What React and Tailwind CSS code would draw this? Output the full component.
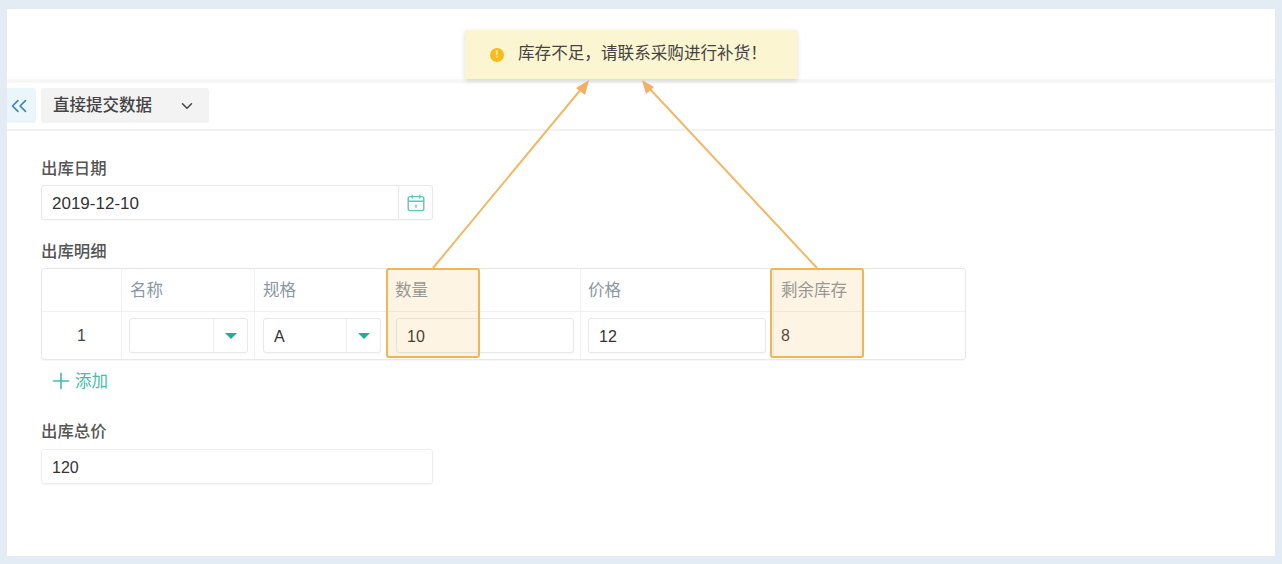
import React from "react";
import { ChevronsLeft, ChevronDown, Plus } from "lucide-react";

const font = "font-['Liberation_Sans','Noto_Sans_CJK_SC',sans-serif]";

const CalendarIcon = () => (
  <svg width="18" height="18" viewBox="0 0 18 18" fill="none" stroke="#5fc6b6" strokeWidth="1.4">
    <rect x="1.2" y="2.6" width="15.6" height="14" rx="2" />
    <path d="M1.2 7.2h15.6M5.2 .8v3.6M12.8 .8v3.6M9 10.4v3.4" />
  </svg>
);

const Field = ({ label, children, className = "", gap = "mt-[5px]" }) => (
  <div className={className}>
    <div className="h-[22px] text-[16.4px] leading-[21px] font-medium text-[#555]">{label}</div>
    <div className={`w-[392px] ${gap}`}>{children}</div>
  </div>
);

const SelectCell = ({ value }) => (
  <div className="flex h-[35px] items-stretch rounded-[3px] border border-[#e9e9e9] bg-white shadow-[0_1px_1px_rgba(0,0,0,0.03)]">
    <div className="flex-1 pl-[10px] text-[16px] leading-[35px] text-[#333]">{value}</div>
    <div className="flex w-[34px] items-center justify-center border-l border-[#eeeeee]">
      <span className="h-0 w-0 border-x-[6px] border-t-[6px] border-x-transparent border-t-[#1fae98]" />
    </div>
  </div>
);

const InputCell = ({ value }) => (
  <div className="h-[35px] rounded-[3px] border border-[#e9e9e9] bg-white pl-[10px] text-[16px] leading-[35px] text-[#333] shadow-[0_1px_1px_rgba(0,0,0,0.03)]">
    {value}
  </div>
);

const Head = ({ children, className = "pl-[8px]" }) => (
  <div className={`h-[43px] border-b border-l border-[#f1f1f1] text-[16.5px] leading-[42px] text-[#8a97a6] ${className}`}>
    {children}
  </div>
);

const Cell = ({ children, className = "" }) => (
  <div className={`h-[47px] border-l border-[#f1f1f1] pt-[6px] ${className}`}>{children}</div>
);

const Mark = ({ className }) => (
  <div className={`absolute top-[-1px] h-[90px] w-[94px] rounded-[3px] border-2 border-[#f2b457] bg-[#f5a623]/12 ${className}`} />
);

const Arrows = () => (
  <svg className="pointer-events-none absolute inset-0 z-20" width="1282" height="564" viewBox="0 0 1282 564" fill="none">
    <path d="M433 268L582 88" stroke="#f2b867" strokeWidth="2" />
    <path d="M817 268L649 88" stroke="#f2b867" strokeWidth="2" />
    <path d="M589 80L576 88L585 95Z" fill="#f2b060" />
    <path d="M642 80L654 87L646 94Z" fill="#f2b060" />
  </svg>
);

export default function App() {
  return (
    <div className={`relative h-screen w-screen overflow-hidden bg-[#e3ebf5] px-[7px] pt-[9px] pb-[8px] ${font}`}>
      <div className="flex h-full flex-col bg-white">
        <div className="relative h-[74px] shrink-0 border-b-[4px] border-[#f7f7f7]">
          <div className="absolute top-[21px] left-[458px] z-10 flex h-[49px] w-[332px] items-center bg-[#fcf5d2] pl-[25px] shadow-[0_2px_5px_rgba(0,0,0,0.14)]">
            <span className="flex h-[14px] w-[14px] items-center justify-center rounded-full bg-[#f8bb1c] text-[10px] font-bold text-[#fff3c4]">!</span>
            <span className="ml-[14px] text-[16.6px] text-[#444]">库存不足，请联系采购进行补货！</span>
          </div>
        </div>

        <div className="flex h-[48px] shrink-0 items-start gap-[5px] border-b-2 border-[#f1f1f1] pt-[5px]">
          <div className="flex h-[35px] w-[29px] items-center justify-start rounded-r-[3px] bg-[#eaf5fc]">
            <ChevronsLeft size={26} strokeWidth={1.5} color="#3f86a8" className="-ml-[1px] shrink-0" />
          </div>
          <div className="flex h-[35px] w-[168px] items-center justify-between rounded-[3px] bg-[#f3f3f3] pr-[13px] pl-[12px] text-[16.5px] font-medium text-[#444]">
            <span>直接提交数据</span>
            <ChevronDown size={18} strokeWidth={2} color="#444" />
          </div>
        </div>

        <div className="flex-1 pt-[27px] pl-[34px]">
          <Field label="出库日期">
            <div className="flex h-[35px] items-stretch rounded-[3px] border border-[#e9e9e9] shadow-[0_1px_1px_rgba(0,0,0,0.03)]">
              <div className="flex-1 pl-[10px] text-[17px] leading-[35px] text-[#333]">2019-12-10</div>
              <div className="flex w-[34px] items-center justify-center border-l border-[#e9e9e9]">
                <CalendarIcon />
              </div>
            </div>
          </Field>

          <div className="mt-[21px] h-[22px] text-[16.4px] leading-[21px] font-medium text-[#555]">出库明细</div>
          <div className="relative mt-[5px] w-[925px] rounded-[3px] border border-[#e8e8e8] shadow-[0_1px_1px_rgba(0,0,0,0.04)]">
            <div className="grid grid-cols-[79px_133px_133px_193px_193px_1fr]">
              <Head className="border-l-0" />
              <Head>名称</Head>
              <Head>规格</Head>
              <Head className="pl-[7px]">数量</Head>
              <Head className="pl-[7px]">价格</Head>
              <Head className="pl-[7px]">剩余库存</Head>

              <Cell className="border-l-0 text-center text-[16px] leading-[35px] text-[#444]">1</Cell>
              <Cell className="pr-[6px] pl-[7px]"><SelectCell value="" /></Cell>
              <Cell className="pr-[6px] pl-[8px]"><SelectCell value="A" /></Cell>
              <Cell className="pr-[6px] pl-[8px]"><InputCell value="10" /></Cell>
              <Cell className="pr-[7px] pl-[7px]"><InputCell value="12" /></Cell>
              <Cell className="pl-[7px] text-[16px] leading-[35px] text-[#444]">8</Cell>
            </div>
            <Mark className="left-[344px]" />
            <Mark className="left-[728px]" />
          </div>

          <div className="mt-[9px] flex h-[24px] items-center pl-[7px] text-[16.5px] text-[#45bcaa]">
            <Plus size={26} strokeWidth={1.5} />
            <span className="ml-[1px]">添加</span>
          </div>

          <Field label="出库总价" className="mt-[28px]" gap="mt-[6px]">
            <div className="h-[35px] rounded-[3px] border border-[#eeeeee] pl-[10px] text-[16px] leading-[35px] text-[#333] shadow-[0_1px_2px_rgba(0,0,0,0.05)]">120</div>
          </Field>
        </div>
      </div>
      <Arrows />
    </div>
  );
}
